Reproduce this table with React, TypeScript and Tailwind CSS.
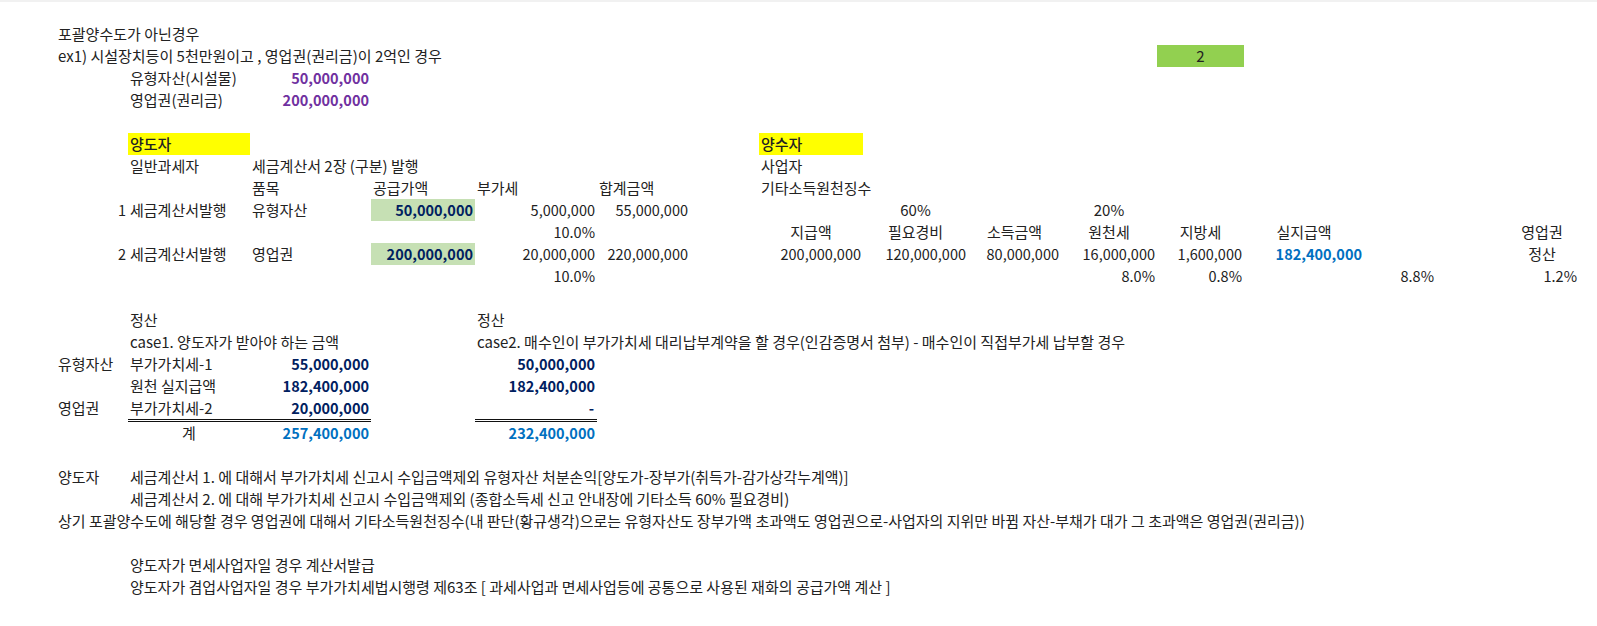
import React from "react";

// column start classes (spreadsheet columns, 1 = left gutter)
const COL: Record<number, string> = {
  1: "col-start-1",
  2: "col-start-2",
  3: "col-start-3",
  4: "col-start-4",
  5: "col-start-5",
  6: "col-start-6",
  7: "col-start-7",
  8: "col-start-8",
  9: "col-start-9",
  10: "col-start-10",
  11: "col-start-11",
  12: "col-start-12",
  13: "col-start-13",
  14: "col-start-14",
  15: "col-start-15",
  16: "col-start-16",
  17: "col-start-17",
};

const ALIGN = {
  l: "text-left pl-[2px]",
  r: "text-right pr-[2px] text-[14.5px]",
  c: "text-center",
};

type Cell = { c: number; t?: string; a?: "l" | "r" | "c"; cls?: string };
type Row = { h?: string; cells: Cell[] };

const A = 2, B = 3, C = 4, D = 5, E = 6, F = 7, H = 9, I = 10, J = 11, K = 12, L = 13, M = 14, N = 15, P = 17;

const purple = "font-bold text-[#7030a0]";
const navy = "font-bold text-[#002060]";
const blue = "font-bold text-[#0070c0]";
const dbl = "h-[25px] border-b-[3px] border-double border-[#111]";

const ROWS: Row[] = [
  { cells: [{ c: A, t: "포괄양수도가 아닌경우" }] },
  {
    cells: [
      { c: A, t: "ex1) 시설장치등이 5천만원이고 , 영업권(권리금)이 2억인 경우" },
      { c: L, t: "2", a: "c", cls: "bg-[#92d050]" },
    ],
  },
  {
    cells: [
      { c: B, t: "유형자산(시설물)" },
      { c: C, t: "50,000,000", a: "r", cls: purple },
    ],
  },
  {
    cells: [
      { c: B, t: "영업권(권리금)" },
      { c: C, t: "200,000,000", a: "r", cls: purple },
    ],
  },
  { cells: [] },
  {
    cells: [
      { c: B, t: "양도자", cls: "bg-[#ffff00] font-medium" },
      { c: H, t: "양수자", cls: "bg-[#ffff00] font-medium" },
    ],
  },
  {
    cells: [
      { c: B, t: "일반과세자" },
      { c: C, t: "세금계산서 2장 (구분) 발행" },
      { c: H, t: "사업자" },
    ],
  },
  {
    cells: [
      { c: C, t: "품목" },
      { c: D, t: "공급가액" },
      { c: E, t: "부가세" },
      { c: F, t: "합계금액" },
      { c: H, t: "기타소득원천징수" },
    ],
  },
  {
    cells: [
      { c: A, t: "1", a: "r" },
      { c: B, t: "세금계산서발행" },
      { c: C, t: "유형자산" },
      { c: D, t: "50,000,000", a: "r", cls: "bg-[#c6e0b4] " + navy },
      { c: E, t: "5,000,000", a: "r" },
      { c: F, t: "55,000,000", a: "r" },
      { c: I, t: "60%", a: "c" },
      { c: K, t: "20%", a: "c" },
    ],
  },
  {
    cells: [
      { c: E, t: "10.0%", a: "r" },
      { c: H, t: "지급액", a: "c" },
      { c: I, t: "필요경비", a: "c" },
      { c: J, t: "소득금액", a: "c" },
      { c: K, t: "원천세", a: "c" },
      { c: L, t: "지방세", a: "c" },
      { c: M, t: "실지급액", a: "c" },
      { c: P, t: "영업권", a: "c" },
    ],
  },
  {
    cells: [
      { c: A, t: "2", a: "r" },
      { c: B, t: "세금계산서발행" },
      { c: C, t: "영업권" },
      { c: D, t: "200,000,000", a: "r", cls: "bg-[#c6e0b4] " + navy },
      { c: E, t: "20,000,000", a: "r" },
      { c: F, t: "220,000,000", a: "r" },
      { c: H, t: "200,000,000", a: "r" },
      { c: I, t: "120,000,000", a: "r" },
      { c: J, t: "80,000,000", a: "r" },
      { c: K, t: "16,000,000", a: "r" },
      { c: L, t: "1,600,000", a: "r" },
      { c: M, t: "182,400,000", a: "r", cls: blue },
      { c: P, t: "정산", a: "c" },
    ],
  },
  {
    cells: [
      { c: E, t: "10.0%", a: "r" },
      { c: K, t: "8.0%", a: "r" },
      { c: L, t: "0.8%", a: "r" },
      { c: N, t: "8.8%", a: "r" },
      { c: P, t: "1.2%", a: "r" },
    ],
  },
  { cells: [] },
  {
    cells: [
      { c: B, t: "정산" },
      { c: E, t: "정산" },
    ],
  },
  {
    cells: [
      { c: B, t: "case1. 양도자가 받아야 하는 금액" },
      {
        c: E,
        t: "case2. 매수인이 부가가치세 대리납부계약을 할 경우(인감증명서 첨부) - 매수인이 직접부가세 납부할 경우",
      },
    ],
  },
  {
    cells: [
      { c: A, t: "유형자산" },
      { c: B, t: "부가가치세-1" },
      { c: C, t: "55,000,000", a: "r", cls: navy },
      { c: E, t: "50,000,000", a: "r", cls: navy },
    ],
  },
  {
    cells: [
      { c: B, t: "원천 실지급액" },
      { c: C, t: "182,400,000", a: "r", cls: navy },
      { c: E, t: "182,400,000", a: "r", cls: navy },
    ],
  },
  {
    h: "h-[25px]",
    cells: [
      { c: A, t: "영업권" },
      { c: B, t: "부가가치세-2", cls: dbl },
      { c: C, t: "20,000,000", a: "r", cls: navy + " " + dbl },
      { c: E, t: "-", a: "r", cls: "pr-[3px] " + navy + " " + dbl },
    ],
  },
  {
    cells: [
      { c: B, t: "계", a: "c" },
      { c: C, t: "257,400,000", a: "r", cls: blue },
      { c: E, t: "232,400,000", a: "r", cls: blue },
    ],
  },
  { cells: [] },
  {
    cells: [
      { c: A, t: "양도자" },
      {
        c: B,
        t: "세금계산서 1. 에 대해서 부가가치세 신고시 수입금액제외 유형자산 처분손익[양도가-장부가(취득가-감가상각누계액)]",
      },
    ],
  },
  {
    cells: [
      {
        c: B,
        t: "세금계산서 2. 에 대해 부가가치세 신고시 수입금액제외 (종합소득세 신고 안내장에 기타소득 60% 필요경비)",
      },
    ],
  },
  {
    cells: [
      {
        c: A,
        t: "상기 포괄양수도에 해당할 경우 영업권에 대해서 기타소득원천징수(내 판단(황규생각)으로는 유형자산도 장부가액 초과액도 영업권으로-사업자의 지위만 바뀜 자산-부채가 대가 그 초과액은 영업권(권리금))",
      },
    ],
  },
  { cells: [] },
  { cells: [{ c: B, t: "양도자가 면세사업자일 경우 계산서발급" }] },
  {
    cells: [
      {
        c: B,
        t: "양도자가 겸업사업자일 경우 부가가치세법시행령 제63조 [ 과세사업과 면세사업등에 공통으로 사용된 재화의 공급가액 계산 ]",
      },
    ],
  },
];

export default function App() {
  return (
    <div className="w-[1597px] h-[626px] bg-white overflow-hidden border-t-2 border-[#f1f1f1] font-['Noto_Sans_CJK_KR',sans-serif] text-[15px] text-[#222]">
      <div className="pt-[21px]">
        {ROWS.map((row, ri) => (
          <div
            key={ri}
            className={
              "grid grid-cols-[56px_72px_122px_121px_104px_122px_93px_69px_104px_105px_93px_96px_87px_120px_72px_69px_74px_1fr] " +
              (row.h ?? "h-[22px]")
            }
          >
            {row.cells.map((cell, ci) => (
              <div
                key={ci}
                className={
                  COL[cell.c] +
                  " row-start-1 h-[22px] leading-[22px] whitespace-nowrap min-w-0 " +
                  ALIGN[cell.a ?? "l"] +
                  " " +
                  (cell.cls ?? "")
                }
              >
                {cell.t}
              </div>
            ))}
          </div>
        ))}
      </div>
    </div>
  );
}
